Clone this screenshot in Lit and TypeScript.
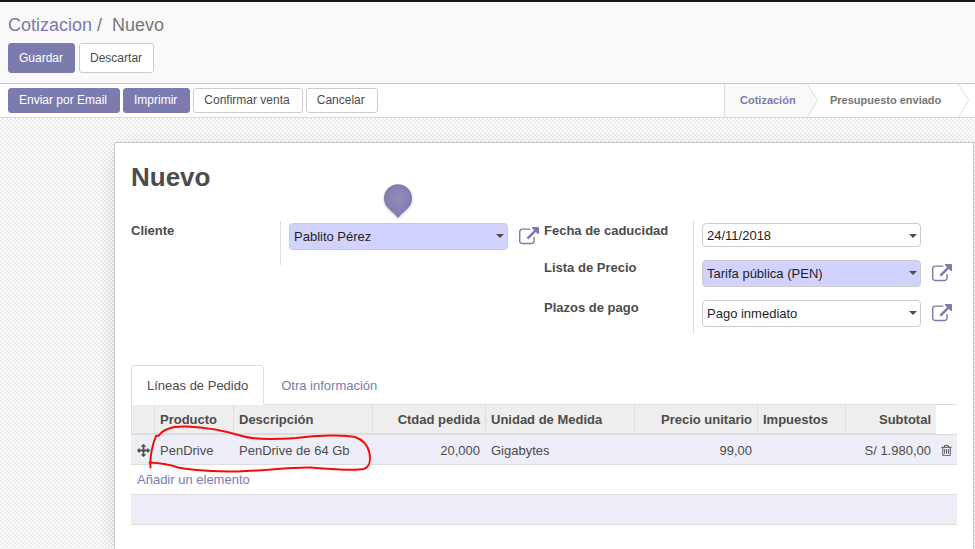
import { LitElement, html, css, svg } from "lit";
import { customElement, state } from "lit/decorators.js";
import { classMap } from "lit/directives/class-map.js";

const externalPath = svg`<path d="M1408 928v320q0 119-84.5 203.5t-203.5 84.5h-832q-119 0-203.5-84.5t-84.5-203.5v-832q0-119 84.5-203.5t203.5-84.5h704q14 0 23 9t9 23v64q0 14-9 23t-23 9h-704q-66 0-113 47t-47 113v832q0 66 47 113t113 47h832q66 0 113-47t47-113v-320q0-14 9-23t23-9h64q14 0 23 9t9 23zm384-864v512q0 26-19 45t-45 19-45-19l-176-176-652 652q-10 10-23 10t-23-10l-114-114q-10-10-10-23t10-23l652-652-176-176q-19-19-19-45t19-45 45-19h512q26 0 45 19t19 45z"/>`;
const movePath = svg`<path d="M1792 896q0 26-19 45l-256 256q-19 19-45 19t-45-19-19-45v-128h-384v384h128q26 0 45 19t19 45-19 45l-256 256q-19 19-45 19t-45-19l-256-256q-19-19-19-45t19-45 45-19h128v-384h-384v128q0 26-19 45t-45 19-45-19l-256-256q-19-19-19-45t19-45l256-256q19-19 45-19t45 19 19 45v128h384v-384h-128q-26 0-45-19t-19-45 19-45l256-256q19-19 45-19t45 19l256 256q19 19 19 45t-19 45-45 19h-128v384h384v-128q0-26 19-45t45-19 45 19l256 256q19 19 19 45z"/>`;
const trashPath = svg`<path d="M704 736v576q0 14-9 23t-23 9h-64q-14 0-23-9t-9-23v-576q0-14 9-23t23-9h64q14 0 23 9t9 23zm256 0v576q0 14-9 23t-23 9h-64q-14 0-23-9t-9-23v-576q0-14 9-23t23-9h64q14 0 23 9t9 23zm256 0v576q0 14-9 23t-23 9h-64q-14 0-23-9t-9-23v-576q0-14 9-23t23-9h64q14 0 23 9t9 23zm128 724v-948h-896v948q0 22 7 40.5t14.5 27 10.5 8.5h832q3 0 10.5-8.5t14.5-27 7-40.5zm-672-1076h448l-48-117q-7-9-17-11h-317q-10 2-17 11zm928 32v64q0 14-9 23t-23 9h-96v948q0 83-47 143.5t-113 60.5h-832q-66 0-113-58.5t-47-141.5v-952h-96q-14 0-23-9t-9-23v-64q0-14 9-23t23-9h309l70-167q15-37 54-63t79-26h320q40 0 79 26t54 63l70 167h309q14 0 23 9t9 23z"/>`;

interface Field {
  id: string;
  label: string;
  value: string;
  kind: "date" | "select";
  required?: boolean;
  pin?: boolean;
}

const leftFields: Field[] = [
  { id: "cliente", label: "Cliente", value: "Pablito Pérez", kind: "select", required: true, pin: true },
];
const rightFields: Field[] = [
  { id: "fecha", label: "Fecha de caducidad", value: "24/11/2018", kind: "date" },
  { id: "lista", label: "Lista de Precio", value: "Tarifa pública (PEN)", kind: "select", required: true },
  { id: "plazos", label: "Plazos de pago", value: "Pago inmediato", kind: "select" },
];

@customElement("app-root")
export class AppRoot extends LitElement {
  @state() private tab = 0;

  static styles = css`
    :host {
      display: flex;
      flex-direction: column;
      height: 100vh;
      overflow: hidden;
      font: 13px/20px "Liberation Sans", Arial, sans-serif;
      color: #4c4c4c;
      background: #fff;
    }
    * { box-sizing: border-box; }
    a { color: #7c7bad; text-decoration: none; }
    button, input, select { font: inherit; margin: 0; }

    .panel {
      border-top: 2px solid #161618;
      border-bottom: 1px solid #c8c8c8;
      background: #f9f9f9;
      padding: 12px 8px 10px;
    }
    .crumbs {
      display: flex;
      gap: 5px;
      font-size: 18px;
      line-height: 22px;
      color: #777;
    }
    .crumbs .current { margin-left: 5px; }
    .actions { display: flex; gap: 4px; margin-top: 7px; }
    .btn {
      height: 30px;
      padding: 0 12px 0 10px;
      border: 1px solid #ccc;
      border-radius: 3px;
      background: #fff;
      color: #4c4c4c;
      font-size: 12px;
      line-height: 18px;
      white-space: nowrap;
    }
    .actions .btn { padding-right: 11px; }
    .btn.primary { background: #7c7bad; border-color: #7c7bad; color: #fff; }

    .status {
      display: flex;
      justify-content: space-between;
      height: 34px;
      flex: none;
      border-bottom: 1px solid #d8d8d8;
      padding-left: 8px;
    }
    .status-actions { display: flex; gap: 3px; align-items: center; }
    .status-actions .btn { height: 25px; padding-bottom: 1px; }
    .steps { display: flex; margin: 0; padding: 0; list-style: none; }
    .step {
      display: flex;
      justify-content: space-between;
      width: 151px;
      font-size: 11px;
      line-height: 32px;
      font-weight: bold;
      color: #777;
      padding-left: 12px;
    }
    .step.active {
      width: 94px;
      background: #f9f9f9;
      border-left: 1px solid #ddd;
      color: #7c7bad;
      padding-left: 15px;
    }
    .step .arrow { width: 11px; height: 33px; background: #fff; }
    .arrow path { fill: #fff; stroke: #ddd; }
    .step.active .arrow path { fill: #f9f9f9; }
    .steps::after { content: ""; width: 6px; }

    .canvas {
      flex: 1;
      display: flex;
      padding: 24px 1px 0 114px;
      background: repeating-conic-gradient(#ebebeb 0 25%, #fff 0 50%) 0 0 / 4px 4px;
    }
    .sheet {
      flex: 1;
      min-width: 0;
      padding: 16px 16px 0;
      border: 1px solid #c8c8d3;
      border-bottom: 0;
      background: #fff;
      box-shadow: 0 5px 20px -5px rgba(0, 0, 0, 0.22);
    }
    h1 { margin: 0; font-size: 26px; line-height: 36px; }

    .groups { display: grid; grid-template-columns: 1fr 1fr; align-items: start; margin-top: 26px; }
    .field { display: grid; grid-template-columns: 149px 1fr; }
    .field label { font-weight: bold; }
    .value {
      display: flex;
      gap: 11px;
      border-left: 1px solid #ddd;
      padding: 2px 5px 11px 8px;
      min-height: 36px;
    }
    .left .value { min-height: 44px; }
    .right .field:last-child .value { padding-bottom: 7px; }
    .box { position: relative; flex: 1; }
    .box.date { margin-right: 31px; }
    .box input, .box select {
      display: block;
      width: 100%;
      height: 27px;
      padding: 0 20px 0 4px;
      border: 1px solid #ccc;
      border-radius: 4px;
      background: #fff;
      color: #1f1f1f;
      appearance: none;
      outline: 0;
    }
    .box input { height: 24px; }
    .box.required select { background: #d2d2ff; }
    .caret { position: absolute; right: 4px; top: 11px; width: 8px; height: 4px; fill: #4c4c4c; pointer-events: none; }
    .pin {
      position: absolute;
      left: calc(50% - 16px);
      bottom: calc(100% + 5px);
      width: 30px;
      height: 35px;
      filter: drop-shadow(0 1px 1px rgba(0, 0, 0, 0.25));
    }
    .open { display: block; width: 20px; height: 20px; padding: 0; border: 0; background: none; margin-top: 4px; }
    .open svg { display: block; width: 20px; height: 20px; fill: #7c7bad; }

    .tabs { display: flex; margin-top: 31px; border-bottom: 1px solid #ddd; }
    .tab {
      height: 40px;
      margin-bottom: -1px;
      padding: 1px 15px 0;
      border: 1px solid transparent;
      border-radius: 4px 4px 0 0;
      background: none;
      color: #7c7bad;
      margin-right: 1px;
    }
    .tab.active { border-color: #ddd #ddd #fff; background: #fff; color: #4c4c4c; }

    .lines { position: relative; }
    table { width: 100%; table-layout: fixed; border-collapse: separate; border-spacing: 0; }
    th, td { height: 30px; padding: 0 5px; text-align: left; white-space: nowrap; border-bottom: 1px solid #ddd; }
    th { background: #eee; border-left: 1px solid #ddd; padding-top: 2px; }
    th:not(.bare) { border-bottom-width: 2px; }
    th.bare { background: #fff; border-left: 0; padding: 0; }
    td { padding-left: 6px; }
    th.num, td.num { text-align: right; }
    .odd td { background: #eeeef8; padding-top: 2px; }
    .c-move { width: 23px; }
    .c-prod { width: 79px; }
    .c-qty { width: 113px; }
    .c-unit { width: 149px; }
    .c-price { width: 123px; }
    .c-tax { width: 88px; }
    .c-total { width: 91px; }
    .c-del { width: 21px; }
    .tool { padding-right: 0; }
    .tool svg { display: block; width: 13px; height: 13px; fill: #4c4c4c; }
    .tool button { display: block; padding: 0; border: 0; background: none; }
    .tool.del { padding-left: 4px; }
    .mark { position: absolute; left: 15px; top: 15px; width: 230px; height: 60px; pointer-events: none; }
  `;

  private caret() {
    return html`<svg class="caret" viewBox="0 0 8 4" aria-hidden="true"><path d="M0 0h8L4 4z" /></svg>`;
  }

  private field(f: Field) {
    return html`<div class="field">
      <label for=${f.id}>${f.label}</label>
      <div class="value">
        <div class=${classMap({ box: true, required: !!f.required, date: f.kind === "date" })}>
          ${f.kind === "date"
            ? html`<input id=${f.id} type="text" .value=${f.value} />`
            : html`<select id=${f.id}><option selected>${f.value}</option></select>`}
          ${this.caret()}
          ${f.pin
            ? html`<svg class="pin" viewBox="0 0 30 35" aria-hidden="true">
                <defs><radialGradient id="g" cx=".5" cy=".42" r=".55">
                  <stop offset="0" stop-color="#8f8eba" /><stop offset="1" stop-color="#7c7bad" />
                </radialGradient></defs>
                <path fill="url(#g)" d="M15 35C13 31.500 8 28.500 5 25A14 14 0 1 1 25 25C22 28.500 17 31.500 15 35z" />
              </svg>`
            : null}
        </div>
        ${f.kind === "select"
          ? html`<button class="open" aria-label="Abrir ${f.label}"><svg viewBox="0 0 1792 1792">${externalPath}</svg></button>`
          : null}
      </div>
    </div>`;
  }

  render() {
    return html`
      <header class="panel">
        <nav class="crumbs"><a href="#">Cotizacion</a><span>/</span><span class="current">Nuevo</span></nav>
        <div class="actions">
          <button class="btn primary">Guardar</button>
          <button class="btn">Descartar</button>
        </div>
      </header>
      <div class="status">
        <div class="status-actions">
          <button class="btn primary">Enviar por Email</button>
          <button class="btn primary">Imprimir</button>
          <button class="btn">Confirmar venta</button>
          <button class="btn">Cancelar</button>
        </div>
        <ol class="steps">
          ${["Cotización", "Presupuesto enviado"].map(
            (s, i) => html`<li class=${classMap({ step: true, active: i === 0 })}>
              ${s}<svg class="arrow" viewBox="0 0 11 33" aria-hidden="true"><path d="M-1 -1L.5 0L10.500 16.500L.5 33L-1 34z" /></svg>
            </li>`
          )}
        </ol>
      </div>
      <main class="canvas">
        <section class="sheet">
          <h1>Nuevo</h1>
          <div class="groups">
            <div class="left">${leftFields.map((f) => this.field(f))}</div>
            <div class="right">${rightFields.map((f) => this.field(f))}</div>
          </div>
          <div class="tabs" role="tablist">
            ${["Líneas de Pedido", "Otra información"].map(
              (t, i) => html`<button
                role="tab"
                aria-selected=${this.tab === i}
                class=${classMap({ tab: true, active: this.tab === i })}
                @click=${() => (this.tab = i)}
              >${t}</button>`
            )}
          </div>
          <div class="lines">
            <table>
              <colgroup>
                <col class="c-move" /><col class="c-prod" /><col /><col class="c-qty" /><col class="c-unit" />
                <col class="c-price" /><col class="c-tax" /><col class="c-total" /><col class="c-del" />
              </colgroup>
              <thead>
                <tr>
                  <th></th><th>Producto</th><th>Descripción</th><th class="num">Ctdad pedida</th>
                  <th>Unidad de Medida</th><th class="num">Precio unitario</th><th>Impuestos</th>
                  <th class="num">Subtotal</th><th class="bare"></th>
                </tr>
              </thead>
              <tbody>
                <tr class="odd">
                  <td class="tool"><svg viewBox="0 0 1792 1792">${movePath}</svg></td>
                  <td>PenDrive</td><td>PenDrive de 64 Gb</td><td class="num">20,000</td><td>Gigabytes</td>
                  <td class="num">99,00</td><td></td><td class="num">S/ 1.980,00</td>
                  <td class="tool del"><button aria-label="Eliminar"><svg viewBox="0 0 1792 1792">${trashPath}</svg></button></td>
                </tr>
                <tr><td colspan="9"><a href="#">Añadir un elemento</a></td></tr>
                <tr class="odd"><td colspan="9"></td></tr>
              </tbody>
            </table>
            <svg class="mark" viewBox="146 420 230 60" aria-hidden="true">
              <path fill="none" stroke="#f50a0a" stroke-width="2" stroke-linecap="round" stroke-linejoin="round"
                d="M150.500 467.500C150 459 152 446 156 436L159 435.500C164 428 176 426 187 426.500C205 427 226 431 244 436.500C256 440 280 439 296 438C318 435 345 434.500 355 437C364 440 368 446 369.500 453C371 463 369 467 364 469C351 471 330 469 311 467.500C290 467 262 471 238 471.500C216 471.500 194 470.500 178 467.500C169 464 160 463 149.500 462.500" />
            </svg>
          </div>
        </section>
      </main>
    `;
  }
}
